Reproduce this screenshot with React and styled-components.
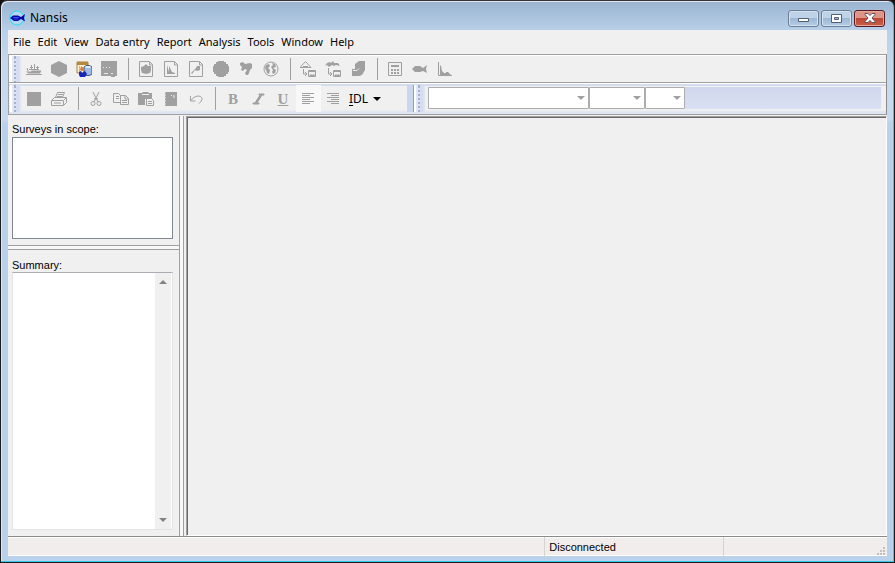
import React from 'react';
import styled, { createGlobalStyle, css } from 'styled-components';

const GlobalStyle = createGlobalStyle`
  * { box-sizing: border-box; }
  body {
    margin: 0;
    background: #101010;
    font-family: 'Noto Sans', 'Open Sans', sans-serif;
    font-size: 11px;
    color: #000;
  }
  button, select, textarea { font: inherit; color: inherit; margin: 0; border-radius: 0; }
`;

const GREY = '#a0a0a0';

const Window = styled.div`
  display: flex;
  flex-direction: column;
  min-height: 100vh;
  padding: 0 6px 6px;
  border: 1px solid #1c1c1c;
  border-top-color: #3a3033;
  border-radius: 7px 7px 0 0;
  background: linear-gradient(#9ab4d0 0, #b8d0e9 30px, #c4d7ec 60px, #c8daee 118px, #b9d1ea 122px);
  box-shadow: inset -1px -1px 0 #35c8e8, inset 1px 1px 0 #dce9f5;
`;

const TitleBar = styled.header`
  display: flex;
  align-items: center;
  height: 29px;
  padding: 5px 3px 0 2px;
`;

const Title = styled.h1`
  flex: 1;
  margin: 0 0 0 4px;
  font-size: 12px;
  font-weight: 400;
  line-height: 16px;
`;

const WindowButtons = styled.div`
  display: flex;
  gap: 2px;
  align-items: center;
`;

const WindowButton = styled.button`
  display: flex;
  align-items: center;
  justify-content: center;
  width: 31px;
  height: 17px;
  padding: 0;
  border: 1px solid ${p => (p.$close ? '#5a1a20' : '#6c7f95')};
  border-radius: 3px;
  box-shadow: inset 0 0 0 1px ${p => (p.$close ? '#e5a69a' : '#d3e2f1')};
  background: ${p =>
    p.$close
      ? 'linear-gradient(#dc9586 0 45%, #bd4634 50%, #c9604b)'
      : 'linear-gradient(#bfd3e8 0 45%, #9db8d5 50%, #b5cce4)'};
`;

const Client = styled.div`
  display: flex;
  flex: 1;
  flex-direction: column;
  margin: 0 1px 0 1px;
  background: #f0f0f0;
`;

const MenuBar = styled.nav`
  display: flex;
  gap: 7px;
  height: 24px;
  padding-left: 5px;
  align-items: center;
`;

const MenuItem = styled.button`
  padding: 0;
  border: 0;
  background: none;
  line-height: 16px;
`;

const Toolbars = styled.div`
  border: 1px solid ${GREY};
  border-right-color: #8c8c8c;
  box-shadow: inset 1px 1px 0 #fff;
`;

const ToolRow = styled.div`
  display: flex;
  height: ${p => (p.$second ? '32px' : '27px')};
  padding: ${p => (p.$second ? '2px 0 2px 1px' : '1px 0 0 1px')};
  border-top: ${p => (p.$second ? `1px solid ${GREY}` : '0')};
  ${p => p.$second && css`
    background: linear-gradient(#fff 0 1px, #d5dcf0 1px 3px, #f0f0f0 3px 27px, #dfe4f3 29px);
  `}
`;

const Band = styled.div`
  display: flex;
  align-items: stretch;
  flex: ${p => (p.$grow ? '1' : 'none')};
  padding-right: ${p => (p.$grow ? '5px' : '6px')};
  border-right: ${p => (p.$grow ? '0' : `1px solid ${GREY}`)};
  background: ${p => (p.$edge ? 'linear-gradient(to left, #ccd5ee 6px, transparent 6px)' : 'none')};
`;

const Grip = styled.div`
  width: 11px;
  margin-right: ${p => (p.$wide ? '3px' : '1px')};
  border-left: 2px solid #fff;
  background:
    linear-gradient(#a9b1c8, #a9b1c8) 2px 1px / 2px 2px no-repeat,
    repeating-linear-gradient(transparent 0 2px, #dde3f3 2px 4px) 2px 1px / 2px 100% no-repeat,
    linear-gradient(#a9b1c8, #a9b1c8) 2px 0 / 2px 100% no-repeat,
    linear-gradient(to right, #e6eaf7, #d3dbf0 6px, #f0f0f0 11px);
`;

const Tool = styled.button`
  display: flex;
  align-items: center;
  justify-content: center;
  width: 25px;
  padding: 0 1px 0 0;
  border: 0;
  color: ${GREY};
  background: ${p => (p.$checked ? '#f8f8f8' : 'none')};
  svg { display: block; }
`;

const Letter = styled(Tool)`
  font-family: 'Liberation Serif', serif;
  font-size: 15px;
  font-weight: 700;
  line-height: 16px;
  text-decoration: ${p => (p.$underline ? 'underline' : 'none')};
`;

const Separator = styled.div`
  width: 12px;
  margin: 2px 0;
  background: linear-gradient(${GREY}, ${GREY}) 6px 0 / 1px 100% no-repeat;
`;

const IdlButton = styled.button`
  display: flex;
  align-items: center;
  gap: 5px;
  width: 61px;
  padding: 0 3px;
  border: 0;
  background: none;
  font-size: 12px;
  u { text-underline-offset: 2px; }
`;

const ComboArea = styled.div`
  display: flex;
  flex: 1;
  align-items: center;
  height: 22px;
  margin-top: 2px;
  background: linear-gradient(#d0d7ec, #d9e0f4);
`;

const ComboBox = styled.label`
  display: grid;
  align-items: center;
  width: ${p => p.$width}px;
  height: 22px;
  select, svg { grid-area: 1 / 1; }
  svg { justify-self: end; margin-right: 4px; pointer-events: none; }
`;

const ComboSelect = styled.select`
  width: 100%;
  height: 22px;
  appearance: none;
  border: 1px solid #adadad;
  border-radius: 1px;
  background: #fff;
  opacity: 1;
`;

const Workspace = styled.main`
  display: flex;
  flex: 1;
  padding-top: 1px;
`;

const Sidebar = styled.aside`
  display: flex;
  flex-direction: column;
  width: 172px;
  border-right: 1px solid ${GREY};
`;

const Panel = styled.section`
  display: flex;
  flex-direction: column;
  gap: ${p => (p.$grow ? '0' : '1px')};
  flex: ${p => (p.$grow ? '1' : 'none')};
  padding: ${p => (p.$grow ? '8px' : '6px')} 6px 6px 4px;
`;

const PanelLabel = styled.label`
  font-family: 'Liberation Sans', Arial, sans-serif;
  font-size: 11px;
  line-height: 14px;
`;

const SurveyList = styled.select`
  width: 100%;
  height: 102px;
  padding: 0;
  border: 1px solid #828790;
  background: #fff;
  outline: 0;
`;

const HorizontalSplitter = styled.div`
  height: 5px;
  border: solid ${GREY};
  border-width: 1px 0;
  background: #f8f8f8;
`;

const VerticalSplitter = styled.div`
  width: 4px;
  border-right: 1px solid ${GREY};
  background: #f8f8f8;
`;

const SummaryBox = styled.div`
  display: flex;
  flex: 1;
  border: 1px solid #e3e3e3;
  border-top-color: #abadb3;
  background: #fff;
`;

const SummaryText = styled.textarea`
  flex: 1;
  min-width: 0;
  padding: 2px;
  border: 0;
  background: #fff;
  outline: 0;
  resize: none;
`;

const ScrollTrack = styled.div`
  display: flex;
  flex-direction: column;
  justify-content: space-between;
  width: 16px;
  margin-right: 1px;
  background: #f0f0f0;
`;

const ScrollButton = styled.button`
  display: flex;
  align-items: center;
  justify-content: center;
  height: 18px;
  padding: 0;
  border: 0;
  background: none;
`;

const Desktop = styled.section`
  flex: 1;
  margin-left: 2px;
  border: 1px solid #fff;
  border-left-color: ${GREY};
  border-top-color: ${GREY};
  box-shadow: inset 1px 1px 0 #696969;
  background: #f0f0f0;
`;

const StatusBar = styled.footer`
  display: grid;
  grid-template-columns: 3fr 1fr 164px;
  height: 20px;
  border-top: 1px solid #8a8a8a;
  border-bottom: 1px solid #fff;
  background: #f1eded;
  box-shadow: inset 0 1px 0 #fff;
  font-family: 'Liberation Sans', Arial, sans-serif;
  line-height: 20px;
`;

const StatusCell = styled.div`
  padding-left: 4px;
  border-left: ${p => (p.$first ? '0' : '1px solid #d5d2d2')};
`;

const GripCell = styled(StatusCell)`
  display: flex;
  align-items: flex-end;
  justify-content: flex-end;
`;

const paths = {
  ship: <><path d="M0 10.500h5l1-1h9.500l-1.500 3H2.500z" fill="currentColor" /><path d="M3 8.500h10M5.500 4v5M8.500 3v6M11.500 5v4M4 6.500h3M10 6.500h3M1 7l1 3M0 13.500h16" stroke="currentColor" fill="none" /></>,
  hexagon: <path d="M8 0 16 4v8l-8 4-8-4V4z" fill="currentColor" />,
  block: <><path d="M0 0h16v15h-2v1h-4v-1H0z" fill="currentColor" /><path d="M2 6.500h1M5 6.500h1M8 6.500h1M3 12.500h4M10 12.500h2" stroke="#e8e8e8" fill="none" /></>,
  square: <path d="M1 1h14v14H1z" fill="currentColor" />,
  pageHex: <><Page /><path d="m8 3 2 2h3v4l-1 3-4 1-4-1-1-3V6l3-1z" fill="currentColor" /></>,
  pageChart: <><Page /><path d="M4 4v9h8v-1l-3-1-2-4-1-2v6z" fill="currentColor" /></>,
  pageFind: <><Page /><path d="m3 12 5-5 1-2h3v4l-3 1-2-1-3 4z" fill="currentColor" /></>,
  ball: <path d="M5 0h6v1h2v2h2v2h1v6h-1v2h-2v2h-2v1H5v-1H3v-2H1v-2H0V5h1V3h2V1h2z" fill="currentColor" />,
  continents: <path d="m2 2 3-1 2 2 5-1 2 1v4l-2 2-1 3-1 2H8l-1-2 2-3-2-1-2 2-2-1 1-3-2-2z" fill="currentColor" />,
  globe: <><circle cx="8" cy="8" r="7" fill="none" stroke="currentColor" /><path d="m3 4 3-1 1 2-2 2 2 2-1 4-2-1-1-3-1-2zM9 2l3 1 1 3-3 1 3 2-1 3-2 1-1-2 1-2-2-3 2-2z" fill="currentColor" /></>,
  triangleExport: <><path d="M5.500.500 0 6.500h11zM3 5.500h5M3.500 8v5h3M5 11l2 2-2 2" fill="none" stroke="currentColor" /><MiniWindow /></>,
  palmExport: <><path d="M0 5 2 2l3-1 1 1 2-2 1 2h4l2 3-4-1-2 1-2-1-3 2-2-2z" fill="currentColor" /><path d="M3.500 7v6h3M5 11l2 2-2 2" fill="none" stroke="currentColor" /><MiniWindow /></>,
  cards: <><path d="M5 3 9 0h6v9l-3 5-3 1H2v-7h3z" fill="currentColor" /><path d="M3 9.500h4l2-2" fill="none" stroke="#f0f0f0" /></>,
  calculator: <><path d="M1.500 1.500h13v13h-13z" fill="none" stroke="currentColor" /><path d="M4 4h8v2H4z" fill="currentColor" /><path d="M4 8h2v2H4zM7 8h2v2H7zM10 8h2v2h-2zM4 11h2v2H4zM7 11h2v2H7zM10 11h2v2h-2z" fill="currentColor" /></>,
  fish: <path d="m0 8 3-3h5l3 2 4-3-1 4 1 4-4-2-3 1H3z" fill="currentColor" />,
  plot: <><path d="M1.500 1v13.500H15" fill="none" stroke="currentColor" /><path d="M3 14V4l1 1 1 5 2 2h2v-1h2l3 3z" fill="currentColor" /></>,
  printer: <path d="m4.500 6.500 2-5h7l-2 5M.500 9.500l3-3h12v5l-3 3H.500zM1 9.500h11.500l3-3M12.500 10v4M3 12h7M7 3.500h5M6 5.500h5" fill="none" stroke="currentColor" />,
  cut: <><path d="m5 1 5 10M11 1 6 11M6 8h4" stroke="currentColor" fill="none" /><circle cx="5" cy="12.500" r="2" fill="none" stroke="currentColor" /><circle cx="11" cy="12.500" r="2" fill="none" stroke="currentColor" /></>,
  copy: <path d="M7 11.500H.500v-9h5l2 2v7M3 5.500h3M3 7.500h3M7.500 4.500h5l3 3v6h-8zM12 4v4h4M9 9.500h5M9 11.500h5" fill="none" stroke="currentColor" />,
  paste: <><path d="M0 2h4l1-1h5l1 1h3v6H7v6H0z" fill="currentColor" /><path d="M4 3.500h7" stroke="#eee" /><path d="M8.500 7.500h5l2 2v5h-7zM10 10.500h4M10 12.500h4" fill="#f0f0f0" stroke="currentColor" /></>,
  book: <><path d="M3 1h11v14H2V2z" fill="currentColor" /><path d="M1 4h2M1 7h2M1 10h2M1 13h2M8 4.500h1M11 4v3" stroke="#eee" fill="none" /></>,
  undo: <path d="M2.500 5v5h5M3 9.500c3-5 10-6 11-2 0 2-1 3-3 5" fill="none" stroke="currentColor" />,
  italic: <path d="M9 3h5v1h-2l-5 8h2v1H3v-1h2l5-8H9z" fill="currentColor" stroke="currentColor" strokeWidth="1" />,
  left: <path d="M2 2.500h12M2 4.500h8M2 6.500h12M2 8.500h8M2 10.500h12M2 12.500h8" stroke="currentColor" />,
  right: <path d="M2 2.500h12M6 4.500h8M2 6.500h12M6 8.500h8M2 10.500h12M6 12.500h8" stroke="currentColor" />,
  database: <><path d="M1 1h11v11H1z" fill="#fff3cf" stroke="#a78442" /><path d="M1 1h11v3H1z" fill="#b8873f" /><path d="M3.500 5v7M5.500 5v5" stroke="#d8b76b" /><path d="M8 6c2-2 6-2 8 0v7c-2 2-6 2-8 0z" fill="#9fbce8" stroke="#3b5278" /><ellipse cx="12" cy="6" rx="3" ry="1" fill="#e9f2ff" /><circle cx="6" cy="8" r="2" fill="#d98241" /><path d="m3 11 2-1 1 2 3-2 2 3-2 3H4l-1-2z" fill="#1525bd" /></>,
};

function Page() {
  return <path d="M1.500.500h10l3 3v12h-13zM11.500 1v3h3" fill="none" stroke="currentColor" />;
}

function MiniWindow() {
  return <><path d="M8.500 9.500h7v6h-7zM8 10.500h8" fill="none" stroke="currentColor" /><path d="m9 15 2-2 1 1 2-1 1 2z" fill="currentColor" /></>;
}

function Icon({ name }) {
  return <svg width="16" height="16" viewBox="0 0 16 16" aria-hidden="true">{paths[name]}</svg>;
}

function Arrow({ up, color = '#a0a0a0' }) {
  return (
    <svg width="8" height="4" viewBox="0 0 8 4" aria-hidden="true">
      <path d={up ? 'M0 4 4 0l4 4z' : 'M0 0h8L4 4z'} fill={color} />
    </svg>
  );
}

function ToolGroup({ items }) {
  return items.map(([name, label]) => (
    <Tool key={name} type="button" aria-label={label}><Icon name={name} /></Tool>
  ));
}

function Combo({ label, width }) {
  return (
    <ComboBox $width={width}>
      <ComboSelect aria-label={label} disabled />
      <Arrow />
    </ComboBox>
  );
}

const menus = ['File', 'Edit', 'View', 'Data entry', 'Report', 'Analysis', 'Tools', 'Window', 'Help'];

export default function App() {
  return (
    <>
      <GlobalStyle />
      <Window>
        <TitleBar>
          <svg width="17" height="16" viewBox="0 0 17 16" aria-hidden="true">
            <circle cx="8" cy="8" r="7" fill="#b5d4ee" stroke="#21dff2" />
            <path d="m1 8 3-2.500h5l3 1.500 4-3-1 4 1 3.500L12 9l-3 2H5z" fill="#0808a8" />
            <path d="M4 7.500h6M5 9h4" stroke="#2750f0" />
          </svg>
          <Title>Nansis</Title>
          <WindowButtons>
            <WindowButton type="button" aria-label="Minimize">
              <svg width="12" height="10" viewBox="0 0 12 10"><path d="M.500 5.500h10v3H.500z" fill="#fff" stroke="#535f70" /></svg>
            </WindowButton>
            <WindowButton type="button" aria-label="Maximize">
              <svg width="11" height="9" viewBox="0 0 11 9"><path d="M.500.500h10v8H.500zM3.500 3.500v2h4v-2z" fill="#fff" fillRule="evenodd" stroke="#535f70" /></svg>
            </WindowButton>
            <WindowButton type="button" aria-label="Close" $close>
              <svg width="12" height="10" viewBox="0 0 12 10"><path d="M1 .500h3l2 2 2-2h3v1L8 5l3 3.500v1H8l-2-2-2 2H1v-1L4 5 1 1.500z" fill="#fff" stroke="#5d4f5d" /></svg>
            </WindowButton>
          </WindowButtons>
        </TitleBar>
        <Client>
          <MenuBar>{menus.map(m => <MenuItem key={m} type="button">{m}</MenuItem>)}</MenuBar>
          <Toolbars>
            <ToolRow>
              <Grip />
              <ToolGroup items={[['ship', 'Vessel'], ['hexagon', 'Station'], ['database', 'Database'], ['block', 'Grid']]} />
              <Separator />
              <ToolGroup items={[['pageHex', 'Station report'], ['pageChart', 'Chart report'], ['pageFind', 'Catch report'], ['ball', 'Region'], ['continents', 'Map'], ['globe', 'Globe']]} />
              <Separator />
              <ToolGroup items={[['triangleExport', 'Export shape'], ['palmExport', 'Export coast'], ['cards', 'Records']]} />
              <Separator />
              <ToolGroup items={[['calculator', 'Calculator'], ['fish', 'Species'], ['plot', 'Plot']]} />
            </ToolRow>
            <ToolRow $second>
              <Band $edge>
                <Grip />
                <ToolGroup items={[['square', 'Save'], ['printer', 'Print']]} />
                <Separator />
                <ToolGroup items={[['cut', 'Cut'], ['copy', 'Copy'], ['paste', 'Paste'], ['book', 'Find'], ['undo', 'Undo']]} />
                <Separator />
                <Letter type="button" aria-label="Bold">B</Letter>
                <Tool type="button" aria-label="Italic"><Icon name="italic" /></Tool>
                <Letter type="button" aria-label="Underline" $underline>U</Letter>
                <Tool type="button" aria-label="Align left" $checked><Icon name="left" /></Tool>
                <Tool type="button" aria-label="Align right"><Icon name="right" /></Tool>
                <IdlButton type="button"><span><u>I</u>DL</span><Arrow color="#000" /></IdlButton>
              </Band>
              <Band $grow>
                <Grip $wide />
                <ComboArea>
                  <Combo label="Font" width={161} />
                  <Combo label="Size" width={56} />
                  <Combo label="Colour" width={40} />
                </ComboArea>
              </Band>
            </ToolRow>
          </Toolbars>
          <Workspace>
            <Sidebar>
              <Panel>
                <PanelLabel htmlFor="surveys">Surveys in scope:</PanelLabel>
                <SurveyList id="surveys" size={6} />
              </Panel>
              <HorizontalSplitter />
              <Panel $grow>
                <PanelLabel htmlFor="summary">Summary:</PanelLabel>
                <SummaryBox>
                  <SummaryText id="summary" readOnly />
                  <ScrollTrack>
                    <ScrollButton type="button" aria-label="Scroll up"><Arrow up color="#838383" /></ScrollButton>
                    <ScrollButton type="button" aria-label="Scroll down"><Arrow color="#838383" /></ScrollButton>
                  </ScrollTrack>
                </SummaryBox>
              </Panel>
            </Sidebar>
            <VerticalSplitter />
            <Desktop aria-label="Documents" />
          </Workspace>
          <StatusBar>
            <StatusCell $first />
            <StatusCell>Disconnected</StatusCell>
            <GripCell>
              <svg width="12" height="12" viewBox="0 0 12 12" aria-hidden="true">
                <path d="M8 2h2v2H8zM8 5h2v2H8zM5 5h2v2H5zM8 8h2v2H8zM5 8h2v2H5zM2 8h2v2H2z" fill="#c4bfbf" />
              </svg>
            </GripCell>
          </StatusBar>
        </Client>
      </Window>
    </>
  );
}
